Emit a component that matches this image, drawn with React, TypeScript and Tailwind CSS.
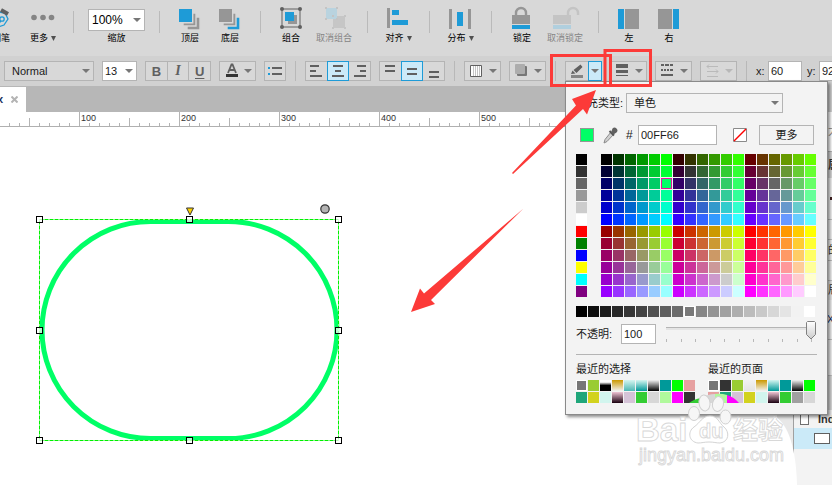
import { useState, type ReactNode } from "react";

const BLUE = "#1e9bd7";
const GRAY = "#969696";
const DARK = "#606060";
const RED = "#fc3a38";

const STEPS = ["00", "33", "66", "99", "CC", "FF"];

const BASIC_COLORS = [
  "#000000", "#333333", "#666666", "#999999", "#CCCCCC", "#FFFFFF",
  "#FF0000", "#008000", "#0000FF", "#FFFF00", "#00FFFF", "#800080",
];

// Web-safe cube: three red levels side by side, two bands of them
const WEB_COLORS = [0, 3].flatMap((band) =>
  STEPS.flatMap((b) => [0, 1, 2].flatMap((r) => STEPS.map((g) => `#${STEPS[band + r]}${g}${b}`)))
);

const GRAYS = Array.from({ length: 20 }, (_, i) => {
  const v = Math.round((i * 255) / 19);
  return `rgb(${v}, ${v}, ${v})`;
});

const fade = (from: string, to: string) => `linear-gradient(${from}, ${to})`;

const RECENT_PICKS = [
  "#777777", "#99cc33", "linear-gradient(#ffffff 20%, #000000 50%)", fade("#cc9900", "#f2f2f2"), fade("#d5f5f0", "#4db8b4"),
  fade("#d5f5f0", "#009999"), fade("#f2f2f2", "#000000"), "#009999", "#00ff00", "#e6a0a0",
  "#1fa67a", "#d2d21e", "#d2f5ee", fade("#f0c4d4", "#1a0010"), "#d5c3d7",
  "#33cc33", "#d7d7d7", "#b0f99c", "#ff00ff", "#333333",
];

const RECENT_PAGES = [
  "#777777", "#333333", "#99cc33", fade("#f2f2f2", "#e4e4e4"), fade("#cc9900", "#f2f2f2"),
  fade("#d5f5f0", "#009999"), "#009999", fade("#f2f2f2", "#000000"), "#00ff00",
  "#e6a0a0", "#1fa67a", "#d5c3d7", "#d2d21e", "#d2f5ee",
  fade("#f0c4d4", "#1a0010"), "#33cc33", "#a0a0a0", "#d7d7d7",
];

export default function App() {
  return (
    <div className="relative flex min-h-screen flex-col overflow-hidden bg-white font-['Liberation_Sans','Noto_Sans_CJK_SC',sans-serif] text-[11px] text-[#1a1a1a]">
      <MainToolbar />
      <FormatBar />
      <div className="flex flex-1">
        <main className="flex min-w-0 flex-1 flex-col">
          <Tabs />
          <Ruler />
          <Canvas />
        </main>
        <div className="w-4 shrink-0 bg-[#e8e8e8]" />
        <SidePanel />
      </div>
      <Watermark />
      <Annotations />
    </div>
  );
}

/* ---------- Top toolbar ---------- */

function Tool({ label, width = "w-10", menu, disabled, children }: {
  label: string;
  width?: string;
  menu?: boolean;
  disabled?: boolean;
  children: ReactNode;
}) {
  return (
    <button
      disabled={disabled}
      className={`flex shrink-0 flex-col items-center pt-[7px] ${width} ${disabled ? "text-[#858585]" : "text-black"}`}
    >
      <svg className="h-6 w-6 overflow-visible" viewBox="0 0 24 24">{children}</svg>
      <span className="flex items-center gap-[3px] pt-px text-[9px] leading-3 whitespace-nowrap">
        {label}
        {menu && <Caret className="h-[5px] w-[5px] text-[#505050]" />}
      </span>
    </button>
  );
}

function Caret({ className = "h-1 w-2 text-[#777]" }: { className?: string }) {
  return (
    <svg className={`shrink-0 ${className}`} viewBox="0 0 8 4" preserveAspectRatio="none">
      <path d="M0 0h8L4 4z" fill="currentColor" />
    </svg>
  );
}

function Divider() {
  return <div className="mx-[10px] mt-[11px] h-[22px] w-px shrink-0 bg-[#bababa]" />;
}

function MainToolbar() {
  return (
    <header className="flex h-14 shrink-0 items-start bg-[#d8d8d8]">
      <div className="-ml-[21px] flex">
        <Tool label="钢笔" width="w-11">
          <g fill="none" stroke={BLUE} strokeWidth="1.3">
            <path d="M3 16 9 5l7 1 3 6-4 6-9 3z" />
            <circle cx="13" cy="12" r="2.2" />
            <path d="M6 20l6-6" />
          </g>
          <path d="M12 3l7 4" stroke={DARK} strokeWidth="4" />
        </Tool>
      </div>
      <Tool label="更多" menu>
        <g fill="#858585">
          <circle cx="3" cy="10.500" r="2.800" />
          <circle cx="12" cy="10.500" r="2.800" />
          <circle cx="20.500" cy="10.500" r="2.800" />
        </g>
      </Tool>
      <Divider />
      <label className="flex w-[65px] shrink-0 flex-col items-center pt-[9px] text-black">
        <span className="flex h-[22px] w-[57px] items-center border border-[#b4b4b4] bg-white pr-[3px]">
          <select defaultValue="100%" className="min-w-0 flex-1 appearance-none bg-transparent pl-[3px] text-[12px] outline-none">
            <option>100%</option>
            <option>50%</option>
          </select>
          <Caret />
        </span>
        <span className="pt-px text-[9px] leading-3">缩放</span>
      </label>
      <Divider />
      <Tool label="顶层">
        <g stroke="#d8d8d8" strokeWidth="1.400">
          <path d="M9 10h13v13H9z" fill={GRAY} />
          <path d="M5 6h13v13H5z" fill={GRAY} />
          <path d="M1 2h13v13H1z" fill={BLUE} stroke="none" />
          <path d="M14.700 2v13.700H1" fill="none" />
        </g>
      </Tool>
      <Tool label="底层">
        <g stroke="#d8d8d8" strokeWidth="1.400">
          <path d="M9 10h13v13H9z" fill={BLUE} />
          <path d="M5 6h13v13H5z" fill={GRAY} />
          <path d="M1 2h13v13H1z" fill={GRAY} stroke="none" />
          <path d="M14.700 2v13.700H1" fill="none" />
        </g>
      </Tool>
      <Divider />
      <Tool label="组合">
        <path d="M3 2h18v18H3z" fill="none" stroke={DARK} />
        <g fill={DARK}>
          <circle cx="3" cy="2" r="2" />
          <circle cx="21" cy="2" r="2" />
          <circle cx="3" cy="20" r="2" />
          <circle cx="21" cy="20" r="2" />
        </g>
        <path d="M9 8h9v9H9z" fill={GRAY} />
        <path d="M6 5h9v9H6z" fill={BLUE} />
      </Tool>
      <Tool label="取消组合" width="w-[46px]" disabled>
        <path d="M11 9h12v12H11z" fill="#c6c6c6" />
        <path d="M4 1h11v11H4z" fill="#b9d3df" />
        <path d="M3 0h2v2H3zM14 0h2v2h-2zM3 11h2v2H3zM14 11h2v2h-2zM10 8h2v2h-2zM22 8h2v2h-2zM10 20h2v2h-2zM22 20h2v2h-2z" fill="#c4c4c4" />
      </Tool>
      <Divider />
      <Tool label="对齐" width="w-[41px]" menu>
        <path d="M0 1h3v20H0z" fill={GRAY} />
        <path d="M5 3h7v5H5zM5 13h16v5H5z" fill={BLUE} />
      </Tool>
      <Divider />
      <Tool label="分布" width="w-[41px]" menu>
        <path d="M0 2h3v20H0zM19 2h3v20h-3z" fill={GRAY} />
        <path d="M8 5h6v14H8z" fill={BLUE} />
      </Tool>
      <Divider />
      <Tool label="锁定">
        <path d="M6 9V6a5 5 0 0 1 10 0v3" fill="none" stroke={GRAY} strokeWidth="2.400" />
        <path d="M2 8h18v9H2z" fill={GRAY} />
        <path d="M2 18h18v4H2z" fill={BLUE} />
      </Tool>
      <Tool label="取消锁定" width="w-[46px]" disabled>
        <path d="M15 9V6a5 5 0 0 1 10 0v2" fill="none" stroke="#c4c4c4" strokeWidth="2.400" />
        <path d="M0 8h18v9H0z" fill="#c4c4c4" />
        <path d="M0 18h18v4H0z" fill="#b0cfde" />
      </Tool>
      <Divider />
      <Tool label="左">
        <path d="M1 2h6v20H1z" fill={BLUE} />
        <path d="M8 2h14v20H8z" fill={GRAY} />
      </Tool>
      <Tool label="右">
        <path d="M1 2h14v20H1z" fill={GRAY} />
        <path d="M16 2h6v20h-6z" fill={BLUE} />
      </Tool>
    </header>
  );
}

/* ---------- Format bar ---------- */

function BarDivider() {
  return <div className="mx-px w-px shrink-0 bg-[#b8b8b8]" />;
}

function ButtonGroup({ labels, active, icons }: { labels: string[]; active?: number; icons: ReactNode[] }) {
  return (
    <div className="flex shrink-0 border border-[#b4b4b4] bg-[#d8d8d8]">
      {icons.map((icon, i) => (
        <button
          key={labels[i]}
          aria-label={labels[i]}
          className={`-my-px flex w-[22px] items-center justify-center border first:-ml-px last:-mr-px ${
            i === active ? "border-[#1e9bd7] bg-[#cbeaf8]" : "border-transparent"
          }`}
        >
          <svg className="h-4 w-4 shrink-0" viewBox="0 0 16 16">{icon}</svg>
        </button>
      ))}
    </div>
  );
}

function MenuButton({ label, disabled, children }: { label: string; disabled?: boolean; children: ReactNode }) {
  return (
    <button
      aria-label={label}
      disabled={disabled}
      className="flex w-[37px] shrink-0 items-center justify-between border border-[#b4b4b4] bg-[#d8d8d8] pr-[3px] pl-1"
    >
      <svg className="h-4 w-4 shrink-0" viewBox="0 0 16 16">{children}</svg>
      <Caret className={disabled ? "h-1 w-2 text-[#b8b8b8]" : "h-1 w-2 text-[#777]"} />
    </button>
  );
}

function lines(...spans: [number, number, number][]) {
  return spans.map(([x, y, w]) => <rect key={y} x={x} y={y} width={w} height="2" fill={DARK} />);
}

function FormatBar() {
  return (
    <div className="flex h-[30px] shrink-0 gap-2 bg-[#d1d1d1] py-[5px] pl-1">
      <span className="flex w-[90px] shrink-0 items-center border border-[#b4b4b4] bg-[#d8d8d8] pr-[3px]">
        <select aria-label="Style" defaultValue="Normal" className="min-w-0 flex-1 appearance-none bg-transparent pl-[7px] outline-none">
          <option>Normal</option>
        </select>
        <Caret />
      </span>
      <span className="flex w-[35px] shrink-0 items-center border border-[#b4b4b4] bg-white pr-[3px]">
        <select aria-label="Font size" defaultValue="13" className="min-w-0 flex-1 appearance-none bg-transparent pl-[2px] outline-none">
          <option>13</option>
        </select>
        <Caret />
      </span>
      <div className="flex w-[66px] shrink-0 divide-x divide-[#b4b4b4] border border-[#b4b4b4] bg-[#d8d8d8] text-[13px] leading-none text-[#606060]">
        <button className="flex-1 font-bold">B</button>
        <button className="flex-1 font-['Liberation_Serif',serif] text-[14px] font-bold italic">I</button>
        <button className="flex-1 font-bold underline underline-offset-2">U</button>
      </div>
      <MenuButton label="Text colour">
        <path d="M4 10 7.500 1.500h1L12 10M5.500 7h5" fill="none" stroke={DARK} strokeWidth="1.800" />
        <path d="M2 11h12v3H2z" fill="#333" />
      </MenuButton>
      <button aria-label="Bullets" className="flex w-[22px] shrink-0 items-center justify-center border border-[#b4b4b4] bg-[#d8d8d8]">
        <svg className="h-4 w-4" viewBox="0 0 16 16">
          <path d="M1 4h2v2H1zM1 10h2v2H1z" fill={BLUE} />
          <path d="M5 4h10v2H5zM5 10h10v2H5z" fill={DARK} />
        </svg>
      </button>
      <BarDivider />
      <ButtonGroup
        labels={["Left", "Center", "Right"]}
        active={1}
        icons={[
          lines([2, 2, 9], [2, 7, 6], [2, 12, 12]),
          lines([3, 2, 10], [5, 7, 6], [2, 12, 12]),
          lines([5, 2, 9], [8, 7, 6], [2, 12, 12]),
        ]}
      />
      <ButtonGroup
        labels={["Top", "Middle", "Bottom"]}
        active={1}
        icons={[
          lines([3, 2, 10], [3, 7, 10]),
          lines([3, 5, 10], [3, 10, 10]),
          lines([3, 8, 10], [3, 13, 10]),
        ]}
      />
      <BarDivider />
      <MenuButton label="Fill">
        <path d="M1.500 2.500h11v11h-11z" fill="#fff" stroke={DARK} />
        <path d="M4.500 3v10M6.500 3v10M8.500 3v10M10.500 3v10" stroke="#c4c4c4" />
      </MenuButton>
      <MenuButton label="Shadow">
        <rect x="3" y="3" width="10" height="10" rx="1" fill="#777" />
        <rect x="1" y="1" width="10" height="10" rx="1" fill="#adadad" />
      </MenuButton>
      <BarDivider />
      <div className="relative z-10 flex w-[37px] shrink-0">
        <button aria-label="Line colour" className="flex flex-1 items-center justify-center border border-r-0 border-[#b4b4b4] bg-[#d8d8d8]">
          <svg className="h-4 w-4" viewBox="0 0 16 16">
            <path d="M2 12h12v3H2z" fill="#858585" />
            <path d="M2 11l1.500-3.500 3 3zM4.500 7l7-5.500L13.500 4l-6 6z" fill={DARK} />
          </svg>
        </button>
        <button aria-label="Open line colours" className="flex w-[14px] items-center justify-center border border-[#1e9bd7] bg-[#cbeaf8]">
          <Caret />
        </button>
        <ColorPopup />
      </div>
      <MenuButton label="Line width">
        <path d="M1 1h12v4H1zM1 7h12v3H1zM1 12h12v1H1z" fill={DARK} />
      </MenuButton>
      <MenuButton label="Line style">
        <path d="M1 1h3v2H1zM5 1h4v2H5zM10 1h3v2h-3zM1 6h2v2H1zM4 6h2v2H4zM7 6h2v2H7zM10 6h3v2h-3zM1 11h12v2H1z" fill={DARK} />
      </MenuButton>
      <MenuButton label="Arrow style" disabled>
        <path d="M2 3.500h11M2 8.500h11M2 13.500h11M4 1.500l-2 2 2 2M11 6.500l2 2-2 2" fill="none" stroke="#bababa" />
      </MenuButton>
      <BarDivider />
      <div className="flex shrink-0 items-stretch gap-[5px]">
        <label className="flex items-center gap-[2px]">
          <span className="w-[10px]">x:</span>
          <input defaultValue="60" className="h-5 w-[34px] border border-[#b4b4b4] bg-white pl-[2px] outline-none" />
        </label>
        <label className="flex items-center gap-[2px]">
          <span className="w-[10px]">y:</span>
          <input defaultValue="92" className="h-5 w-[34px] border border-[#b4b4b4] bg-white pl-[2px] outline-none" />
        </label>
      </div>
    </div>
  );
}

/* ---------- Colour popup ---------- */

function Swatch({ color, ring }: { color: string; ring?: string }) {
  return (
    <button
      aria-label={color}
      className={`h-[11px] w-[11px] ${ring ?? ""}`}
      style={{ background: color }}
    />
  );
}

function ColorPopup() {
  const [hex, setHex] = useState("00FF66");
  const [opacity, setOpacity] = useState(100);

  return (
    <div className="absolute top-full left-0 w-[263px] border border-[#8a8a8a] bg-[#f3f3f3] px-[10px] pt-[11px] pb-[11px] shadow-[2px_2px_3px_rgba(0,0,0,0.45)]">
      <label className="flex h-5 items-center">
        <span className="w-[50px] shrink-0 whitespace-nowrap">填充类型:</span>
        <span className="flex h-5 w-[157px] items-center border border-[#b4b4b4] pr-[3px]">
          <select defaultValue="单色" className="min-w-0 flex-1 appearance-none bg-transparent pl-[7px] outline-none">
            <option>单色</option>
          </select>
          <Caret />
        </span>
      </label>

      <div className="mt-3 flex h-5 items-center pl-1">
        <span className="h-[14px] w-[14px] border border-[#969696]" style={{ background: `#${hex}` }} />
        <button aria-label="Eyedropper" className="ml-2">
          <svg className="h-[18px] w-4" viewBox="0 0 16 18">
            <path d="M9 6l2.500 2.500-6.500 7-3 1.500 1-3.500z" fill="#d0d0d0" stroke="#8a8a8a" />
            <path d="M7.500 5l4.500 4.500" stroke="#555" strokeWidth="2" />
            <path d="M9 6.500l1.500-4a2.800 2.800 0 0 1 4 4L11.500 8.500z" fill="#606060" />
          </svg>
        </button>
        <label className="ml-2 flex items-center text-[12px]">
          <span className="w-3">#</span>
          <input
            value={hex}
            onChange={(e) => setHex(e.target.value)}
            className="h-5 w-[79px] border border-[#b4b4b4] bg-white pl-[2px] text-[11px] outline-none"
          />
        </label>
        <button aria-label="No colour" className="ml-4">
          <svg className="h-[14px] w-[14px]" viewBox="0 0 14 14">
            <path d="M.5.5h13v13H.5z" fill="#fff" stroke="#8a8a8a" />
            <path d="M1 13 13 1" stroke="#f00" strokeWidth="1.500" />
          </svg>
        </button>
        <button className="ml-3 h-5 w-[55px] border border-[#b4b4b4] leading-none">更多</button>
      </div>

      <div className="mt-[9px] flex gap-[14px]">
        <div className="flex flex-col gap-px">
          {BASIC_COLORS.map((c) => <Swatch key={c} color={c} />)}
        </div>
        <div className="grid shrink-0 grid-cols-[repeat(18,11px)] gap-px">
          {WEB_COLORS.map((c) => (
            <Swatch key={c} color={c} ring={c === "#00FF66" ? "border border-[#e6149b]" : undefined} />
          ))}
        </div>
      </div>

      <div className="mt-[9px] flex gap-px">
        {GRAYS.map((c, i) => <Swatch key={c} color={c} ring={i === 9 ? "border border-white" : undefined} />)}
      </div>

      <div className="mt-[7px] flex h-5 items-center">
        <label className="flex shrink-0 items-center">
          <span className="w-[45px]">不透明:</span>
          <input
            value={opacity}
            onChange={(e) => setOpacity(Number(e.target.value) || 0)}
            className="h-5 w-[35px] border border-[#b4b4b4] bg-white pl-[2px] outline-none"
          />
        </label>
        <div className="relative ml-[9px] h-6 w-[153px] shrink-0">
          <svg className="h-6 w-[153px] overflow-visible" viewBox="0 0 153 24">
            <path d="M1 5.500h146" stroke="#b4b4b4" />
            <path d="M1 7h146" stroke="#e4e4e4" strokeWidth="2" />
            {Array.from({ length: 11 }, (_, i) => (
              <path key={i} d={`M${Math.round(i * 14.5) + 1.5} 17v3`} stroke="#b8b8b8" />
            ))}
            <path
              d="M-3.500-.5h7l1 1v12L0 17l-4.500-4.500v-12z"
              transform={`translate(${1 + opacity * 1.45} 0)`}
              fill="url(#knob)"
              stroke="#808080"
            />
            <defs>
              <linearGradient id="knob" x1="0" y1="0" x2="0" y2="1">
                <stop offset="0" stopColor="#fff" />
                <stop offset="1" stopColor="#ccc" />
              </linearGradient>
            </defs>
          </svg>
          <input
            type="range"
            aria-label="不透明"
            value={opacity}
            onChange={(e) => setOpacity(Number(e.target.value))}
            className="absolute inset-0 w-full opacity-0"
          />
        </div>
      </div>

      <div className="mt-[10px] flex gap-[13px] border-t border-[#b4b4b4] pt-[6px]">
        <section>
          <h2 className="mb-[3px] leading-4">最近的选择</h2>
          <div className="grid grid-cols-[repeat(10,11px)] gap-px">
            {RECENT_PICKS.map((c, i) => <Swatch key={i} color={c} ring={i === 0 ? "border border-white" : undefined} />)}
          </div>
        </section>
        <section>
          <h2 className="mb-[3px] leading-4">最近的页面</h2>
          <div className="grid grid-cols-[repeat(9,11px)] gap-px">
            {RECENT_PAGES.map((c, i) => <Swatch key={i} color={c} ring={i === 0 ? "border border-white" : undefined} />)}
          </div>
        </section>
      </div>
    </div>
  );
}

/* ---------- Document area ---------- */

function Tabs() {
  return (
    <div className="flex h-[26px] shrink-0 bg-[#b7b7b7] pt-px">
      <div className="flex w-[26px] items-center gap-2 overflow-hidden bg-white">
        <span className="-ml-[3px] text-[11px] font-bold text-[#1a2f5c]">x</span>
        <button aria-label="Close tab">
          <svg className="h-[7px] w-[7px]" viewBox="0 0 7 7">
            <path d="M.5.5l6 6m0-6l-6 6" stroke="#b4b4b4" strokeWidth="2" />
          </svg>
        </button>
      </div>
    </div>
  );
}

function Ruler() {
  return (
    <svg className="h-[15px] w-full shrink-0 bg-white">
      <defs>
        <pattern id="ticks" x="-21" width="100" height="15" patternUnits="userSpaceOnUse">
          <path
            d="M.5 0v15M10.500 11v4M20.500 11v4M30.500 11v4M40.500 11v4M50.500 6v9M60.500 11v4M70.500 11v4M80.500 11v4M90.500 11v4"
            stroke="#b4b4b4"
          />
        </pattern>
      </defs>
      <rect width="100%" height="15" fill="url(#ticks)" />
      <rect y="14" width="100%" height="1" fill="#b0b0b0" />
      {[100, 200, 300, 400, 500].map((n) => (
        <text key={n} x={n - 19} y="9" fontSize="9" fill="#333">{n}</text>
      ))}
    </svg>
  );
}

function Canvas() {
  return (
    <svg className="min-h-0 w-full flex-1 bg-white">
      <rect x="42" y="94.500" width="295" height="217" rx="108.500" fill="none" stroke="#00ff66" strokeWidth="5" />
      <rect x="39.500" y="92.500" width="299" height="221" fill="none" stroke="#fff" />
      <rect x="39.500" y="92.500" width="299" height="221" fill="none" stroke="#00f000" strokeDasharray="4 1" />
      {[39.5, 189.5, 338.5].flatMap((x) =>
        [92.5, 203.5, 313.5]
          .filter((y) => !(x === 189.5 && y === 203.5))
          .map((y) => (
            <rect key={`${x}-${y}`} x={x - 3} y={y - 3} width="6" height="6" fill="#fff" fillOpacity="0.700" stroke="#000" />
          ))
      )}
      <path d="M186.500 81h7L190 88z" fill="#ffd200" stroke="#333" />
      <circle cx="325" cy="82" r="4.200" fill="#b4b4b4" stroke="#333" strokeWidth="1.200" />
    </svg>
  );
}

function SidePanel() {
  return (
    <aside className="flex w-[39px] shrink-0 flex-col overflow-hidden border-l border-[#a0a0a0] bg-[#f3f3f3] text-[#333]">
      <div className="h-[26px] shrink-0 bg-[#d1d1d1]" />
      <div className="flex h-10 shrink-0 items-center justify-end border-b border-[#b4b4b4] bg-white text-[#888]">
        <span className="-mr-[7px]">大</span>
      </div>
      <div className="flex h-[26px] shrink-0 items-center justify-end bg-[#d8d8d8] font-bold">
        <span className="-mr-[7px]">属</span>
      </div>
      <div className="flex h-[42px] shrink-0 items-center justify-end border-b border-[#c0c0c0]">
        <span className="h-[3px] w-[2px] bg-[#402020]" />
      </div>
      <div className="h-5 shrink-0 border-b border-[#c0c0c0]" />
      <div className="flex h-[21px] shrink-0 items-center justify-end border-b border-[#c0c0c0]">
        <span className="-mr-[7px]">的</span>
      </div>
      <div className="h-5 shrink-0 border-b border-[#c0c0c0]" />
      <div className="flex h-[19px] shrink-0 items-center justify-end bg-[#e8e8e8]">
        <span className="-mr-[7px]">局</span>
      </div>
      <div className="flex h-10 shrink-0 items-center justify-end border-b border-[#c0c0c0] text-[#1a2f5c]">
        <span className="-mr-[2px]">X</span>
      </div>
      <div className="h-9 shrink-0 border-b border-[#c0c0c0]" />
      <div className="h-[34px] shrink-0 bg-[#dadada]" />
      <div className="flex h-[18px] shrink-0 items-center gap-[9px] pl-[6px] font-bold whitespace-nowrap">
        <span className="h-3 w-[9px] shrink-0 border border-[#707070] bg-white" />
        Index
      </div>
      <div className="flex h-[21px] shrink-0 items-center bg-[#cbeaf8] pl-5">
        <span className="h-[11px] w-4 shrink-0 border border-[#606060] bg-white" />
      </div>
    </aside>
  );
}

/* ---------- Overlays ---------- */

function Watermark() {
  return (
    <svg className="pointer-events-none absolute top-[385px] left-[630px] z-20 h-[100px] w-[170px]" viewBox="630 385 170 100">
      {/* white glow that hides the scrollbar */}
      <path d="M776 417c12 8 20 30 21 68H776z" fill="#fff" />
      <path d="M689 403q5-4 12-5l1 5z" fill="#33cc33" />
      <path d="M701 403v-5q7-4 14-4v9z" fill="#d7d7d7" />
      <path d="M715 403v-9q6-1 12 1v8z" fill="#b0f99c" />
      <path d="M727 403v-8q7 2 12 8z" fill="#ff00ff" />
      <g fill="#f6f6f6" stroke="#d0d0d0">
        <ellipse cx="694" cy="413.500" rx="5.500" ry="7" />
        <ellipse cx="704.500" cy="403" rx="5.500" ry="8" transform="rotate(-8 704.500 403)" />
        <ellipse cx="718" cy="404" rx="5.500" ry="7.500" transform="rotate(12 718 404)" />
        <ellipse cx="725.500" cy="417" rx="5.500" ry="7" />
      </g>
      <path
        d="M710 416c8 0 9 7 14 11 6 5 5 15-4 16-4 0-6-1-11-1s-7 1-11 1c-9-1-11-11-4-16 6-4 8-11 16-11z"
        fill="#fff"
        stroke="#d4d4d4"
      />
      <g fill="#fff" stroke="#d8d8d8" strokeWidth="0.900" fontFamily="'Liberation Sans', 'Noto Sans CJK SC', sans-serif">
        <text x="636" y="441" fontSize="33" fontWeight="700">Bai</text>
        <text x="699" y="438" fontSize="20" fontWeight="700">du</text>
        <text x="733" y="439" fontSize="25" fontWeight="700">经验</text>
        <text x="639" y="461" fontSize="18">jingyan.baidu.com</text>
      </g>
    </svg>
  );
}

function Annotations() {
  return (
    <svg className="pointer-events-none absolute top-0 left-0 z-30 h-full w-full">
      <g fill="none" stroke={RED} strokeWidth="3">
        <rect x="551.500" y="55.500" width="59" height="30" />
        <rect x="605" y="50.500" width="45.500" height="35" />
      </g>
      <g fill={RED}>
        <path d="M596 90l-24 9 4 6.500-64 67.500 1 1 70-65 4 5.500z" />
        <path d="M411 312l9-23.500 4 5L523.500 208.500 431 300l4 4z" />
      </g>
    </svg>
  );
}
